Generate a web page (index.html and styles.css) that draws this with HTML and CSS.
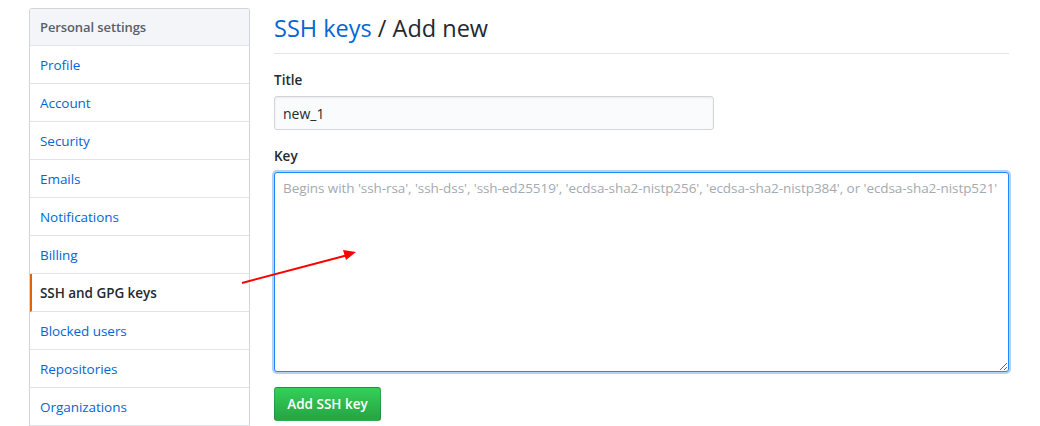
FILE: index.html
```html
<!DOCTYPE html>
<html>
<head>
<meta charset="utf-8">
<link rel="stylesheet" href="styles.css">
</head>
<body>
<div class="page">
  <nav class="menu">
    <div class="menu-heading">Personal settings</div>
    <a class="menu-item">Profile</a>
    <a class="menu-item">Account</a>
    <a class="menu-item">Security</a>
    <a class="menu-item">Emails</a>
    <a class="menu-item">Notifications</a>
    <a class="menu-item">Billing</a>
    <a class="menu-item selected">SSH and GPG keys</a>
    <a class="menu-item">Blocked users</a>
    <a class="menu-item">Repositories</a>
    <a class="menu-item">Organizations</a>
  </nav>
  <main class="main">
    <h2 class="subhead"><a class="crumb">SSH keys</a> / Add new</h2>
    <div class="form-group">
      <label class="label">Title</label>
      <input class="input" type="text" value="new_1">
    </div>
    <div class="form-group">
      <label class="label">Key</label>
      <textarea class="textarea" placeholder="Begins with 'ssh-rsa', 'ssh-dss', 'ssh-ed25519', 'ecdsa-sha2-nistp256', 'ecdsa-sha2-nistp384', or 'ecdsa-sha2-nistp521'"></textarea>
    </div>
    <button class="btn">Add SSH key</button>
  </main>
</div>
<svg class="arrow" width="130" height="50" viewBox="0 0 130 50">
  <line x1="2" y1="43" x2="108" y2="15" stroke="#f00" stroke-width="2"/>
  <polygon points="116,12 103,10 106,20" fill="#f00"/>
</svg>
</body>
</html>
```
FILE: styles.css
```css
* { box-sizing: border-box; }
body {
  margin: 0;
  background: #fff;
  font-family: "Open Sans", "Noto Sans", sans-serif;
  font-size: 14px;
  color: #24292e;
  position: relative;
}
.page {
  display: flex;
  gap: 24px;
  padding: 8px 0 0 29px;
}
.menu {
  width: 221px;
  flex: none;
  border: 1px solid #d1d5da;
  border-radius: 3px 3px 0 0;
  border-bottom: none;
  display: flex;
  flex-direction: column;
}
.menu-heading {
  height: 37px;
  display: flex;
  align-items: center;
  padding: 0 10px;
  background: #f3f5f8;
  color: #586069;
  font-size: 13px;
  font-weight: 600;
  border-bottom: 1px solid #e1e4e8;
  letter-spacing: -0.1px;
}
.menu-item {
  height: 38px;
  display: flex;
  align-items: center;
  padding: 0 10px;
  color: #0366d6;
  border-bottom: 1px solid #e1e4e8;
  font-size: 13.5px;
  letter-spacing: -0.05px;
}
.menu-item.selected {
  color: #24292e;
  font-weight: 600;
  border-left: 2px solid #e36209;
  padding-left: 8px;
}
.main {
  width: 735px;
  flex: none;
}
.subhead {
  margin: 0;
  font-weight: 400;
  font-size: 23.5px;
  letter-spacing: 0;
  padding: 5px 0 10px;
  border-bottom: 1px solid #e1e4e8;
  line-height: 30px;
}
.crumb { color: #0366d6; }
.form-group {
  display: flex;
  flex-direction: column;
}
.form-group:first-of-type { margin-top: 16px; }
.form-group + .form-group { margin-top: 16px; }
.label {
  font-weight: 600;
  font-size: 13.5px;
  line-height: 20px;
  margin-bottom: 6px;
}
.input {
  width: 440px;
  height: 34px;
  padding: 6px 8px;
  font: inherit;
  font-size: 14px;
  color: #24292e;
  background: #fafbfc;
  border: 1px solid #d1d5da;
  border-radius: 3px;
  box-shadow: inset 0 1px 2px rgba(27,31,35,.075);
  outline: none;
}
.textarea {
  width: 735px;
  height: 200px;
  padding: 6px 2px 6px 8px;
  font: inherit;
  font-size: 13.5px;
  letter-spacing: -0.07px;
  border: 1px solid #2188ff;
  border-radius: 3px;
  box-shadow: 0 0 0 2px rgba(3,102,214,.3);
  outline: none;
  resize: vertical;
  background: #fff;
}
.textarea::placeholder { color: #a3aab1; }
.btn {
  margin-top: 15px;
  width: 107px;
  height: 34px;
  font: inherit;
  font-weight: 600;
  font-size: 13.5px;
  color: #fff;
  background: linear-gradient(-180deg, #34d058 0%, #28a745 90%);
  border: 1px solid rgba(27,31,35,.2);
  border-radius: 3px;
  padding: 0;
}
.arrow {
  position: absolute;
  left: 240px;
  top: 240px;
}
```
